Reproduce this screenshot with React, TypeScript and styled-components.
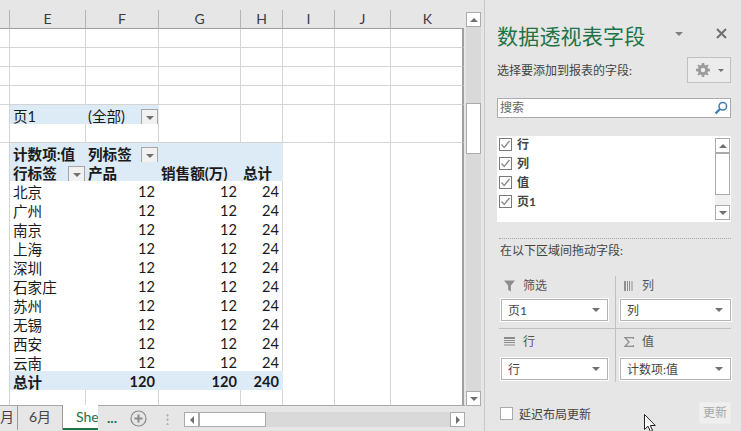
import styled, { createGlobalStyle } from "styled-components";
import { ReactNode } from "react";

const FONT = `Lato, "Noto Sans CJK SC", sans-serif`;
const COLUMNS = ["E", "F", "G", "H", "I", "J", "K"];
const CITIES = ["北京", "广州", "南京", "上海", "深圳", "石家庄", "苏州", "无锡", "西安", "云南"];
const FIELDS = ["行", "列", "值", "页1"];

const GlobalStyle = createGlobalStyle`
  html, body { margin: 0; padding: 0; background: #e6e6e6; overflow: hidden; }
  * { box-sizing: border-box; }
`;

const Page = styled.div`
  position: relative;
  display: flex;
  width: 741px;
  height: 431px;
  overflow: hidden;
  font-family: ${FONT};
  background: #e6e6e6;
`;

const Workbook = styled.div`
  width: 485px;
  flex: none;
  display: flex;
  flex-direction: column;
  border-right: 1px solid #c8c8c8;
`;

const SheetArea = styled.div`
  height: 396px;
  margin-top: 10px;
  display: flex;
  flex: none;
`;

const Grid = styled.div`
  width: 464px;
  height: 396px;
  overflow: hidden;
  background: #fff;
`;

const GridRow = styled.div`
  display: grid;
  grid-template-columns: 10px 76px 73px 82px 42px 52px 56px 73px;
  height: 19px;
`;

const HeaderCell = styled.div`
  background: #e6e6e6;
  border-right: 1px solid #b4b4b4;
  border-bottom: 2px solid #9e9e9e;
  color: #3c3c3c;
  font-size: 14px;
  line-height: 18px;
  text-align: center;
  &:last-child { border-right: 0; }
`;

const Cell = styled.div<{ $blue?: boolean; $plain?: boolean; $edge?: boolean; $rule?: boolean; $right?: boolean; $bold?: boolean }>`
  display: flex;
  align-items: center;
  justify-content: ${(p) => (p.$right ? "flex-end" : "space-between")};
  padding: 0 ${(p) => (p.$right ? "3px" : "0")} 4px ${(p) => (p.$right ? "0" : "2px")};
  background: ${(p) => (p.$blue ? "#ddebf7" : "#fff")};
  border-right: 1px solid ${(p) => (p.$blue || (p.$plain && !p.$edge) ? "transparent" : "#d4d4d4")};
  border-bottom: 1px solid ${(p) => (p.$rule ? "#9bc2e6" : p.$blue || p.$plain ? "transparent" : "#d4d4d4")};
  color: #1a1a1a;
  font-size: 14.6px;
  font-weight: ${(p) => (p.$bold ? 700 : 400)};
  white-space: nowrap;
  &:last-child { border-right: 2px solid #a0a0a0; }
`;

const FirstText = styled.span`
  padding-left: 1px;
`;

const FilterButton = styled.span`
  width: 17px;
  height: 17px;
  flex: none;
  margin-bottom: -4px;
  display: flex;
  align-items: center;
  justify-content: center;
  background: #f1f1f1;
  border: 1px solid #a6a6a6;
`;

const Tri = styled.i<{ $size?: number; $color?: string; $dir?: "up" | "down" | "left" | "right" }>`
  display: block;
  width: 0;
  height: 0;
  ${(p) => {
    const s = p.$size ?? 4;
    const c = p.$color ?? "#707070";
    if (p.$dir === "up") return `border: ${s}px solid transparent; border-top: 0; border-bottom-color: ${c};`;
    if (p.$dir === "left") return `border: ${s}px solid transparent; border-left: 0; border-right-color: ${c};`;
    if (p.$dir === "right") return `border: ${s}px solid transparent; border-right: 0; border-left-color: ${c};`;
    return `border: ${s}px solid transparent; border-bottom: 0; border-top-color: ${c};`;
  }}
`;

const VScroll = styled.div`
  width: 15px;
  margin: 2px 0 0 2px;
  background: #d9d9d9;
  display: flex;
  flex-direction: column;
  justify-content: space-between;
  position: relative;
`;

const ScrollButton = styled.div`
  width: 15px;
  height: 15px;
  flex: none;
  display: flex;
  align-items: center;
  justify-content: center;
  background: #fff;
  border: 1px solid #ababab;
`;

const VThumb = styled.div`
  position: absolute;
  top: 91px;
  left: 0;
  width: 15px;
  height: 51px;
  background: #fff;
  border: 1px solid #ababab;
`;

const TabBar = styled.div`
  height: 25px;
  display: flex;
  border-top: 1px solid #a8a8a8;
  margin-right: 19px;
  margin-top: -1px;
  font-size: 14px;
  color: #444;
`;

const Tab = styled.div<{ $width: number; $active?: boolean; $cut?: boolean }>`
  width: ${(p) => p.$width}px;
  flex: none;
  height: 25px;
  margin-top: -1px;
  overflow: hidden;
  white-space: nowrap;
  border-right: ${(p) => (p.$active ? "0" : "1px solid #9a9a9a")};
  line-height: 23px;
  text-align: ${(p) => (p.$active ? "left" : p.$cut ? "right" : "center")};
  padding: 0 ${(p) => (p.$cut ? "4px" : "0")} 0 ${(p) => (p.$active ? "13px" : "0")};
  background: ${(p) => (p.$active ? "#fff" : "transparent")};
  color: ${(p) => (p.$active ? "#217346" : "#444")};
  border-bottom: ${(p) => (p.$active ? "2px solid #217346" : "0")};
`;

const Ellipsis = styled.div`
  width: 32px;
  flex: none;
  padding-left: 9px;
  color: #217346;
  font-weight: 700;
  font-size: 14px;
  line-height: 24px;
`;

const PlusSlot = styled.div`
  width: 17px;
  flex: none;
  display: flex;
  align-items: center;
`;

const Grip = styled.div`
  width: 4px;
  height: 12px;
  margin: 7px 14px 0 19px;
  flex: none;
  background: radial-gradient(circle, #b5b5b5 1.2px, transparent 1.3px) 0 0 / 3px 4.5px repeat-y;
`;

const HScroll = styled.div`
  width: 281px;
  height: 15px;
  margin-top: 6px;
  flex: none;
  display: flex;
  background: #d9d9d9;
`;

const HThumb = styled.div`
  width: 67px;
  background: #fff;
  border: 1px solid #ababab;
`;

const Spacer = styled.div`
  flex: 1;
`;

const Panel = styled.div`
  width: 256px;
  flex: none;
  display: flex;
  flex-direction: column;
  padding: 0 10px 0 12px;
  color: #444;
  font-size: 12px;
`;

const TitleRow = styled.div`
  height: 57px;
  padding-top: 21px;
  display: flex;
  align-items: flex-start;
  justify-content: space-between;
`;

const Title = styled.div`
  font-size: 21px;
  line-height: 30px;
  color: #217346;
  letter-spacing: 0.2px;
  white-space: nowrap;
`;

const TitleIcons = styled.div`
  display: flex;
  align-items: center;
  gap: 33px;
  padding: 7px 4px 0 0;
`;

const SubRow = styled.div`
  height: 26px;
  display: flex;
  align-items: center;
  justify-content: space-between;
`;

const SubLabel = styled.span`
  padding-bottom: 2px;
`;

const GearButton = styled.div`
  width: 44px;
  height: 26px;
  display: flex;
  align-items: center;
  justify-content: flex-end;
  gap: 8px;
  padding-right: 6px;
  background: #ececec;
  border: 1px solid #c0c0c0;
`;

const Search = styled.div`
  height: 20px;
  margin-top: 15px;
  display: flex;
  align-items: center;
  justify-content: space-between;
  padding: 0 2px;
  background: #fff;
  border: 1px solid #ababab;
  color: #666;
`;

const SearchText = styled.span`
  padding-bottom: 3px;
`;

const FieldBox = styled.div`
  height: 86px;
  margin-top: 18px;
  display: flex;
  background: #fff;
`;

const FieldList = styled.div`
  flex: 1;
  margin-top: -1px;
  padding-left: 2px;
`;

const FieldRow = styled.label`
  height: 19px;
  display: flex;
  align-items: center;
  gap: 5px;
  font-weight: 700;
  color: #444;
  line-height: 16px;
`;

const CheckBox = styled.span<{ $light?: boolean }>`
  width: 13px;
  height: 13px;
  flex: none;
  display: flex;
  align-items: center;
  justify-content: center;
  background: #fff;
  border: 1px solid ${(p) => (p.$light ? "#ababab" : "#7a7a7a")};
`;

const ListScroll = styled.div`
  width: 15px;
  margin: 2px 1px 2px 0;
  display: flex;
  flex-direction: column;
  background: #f0f0f0;
`;

const ListThumb = styled.div`
  height: 42px;
  background: #fff;
  border: 1px solid #ababab;
`;

const DottedRule = styled.div`
  height: 1px;
  margin: 16px 0 0 2px;
  border-top: 1px dotted #a8a8a8;
`;

const DragLabel = styled.div`
  margin: 3px 0 0 3px;
  line-height: 18px;
`;

const Quadrants = styled.div`
  margin: 16px 0 0 2px;
  display: grid;
  grid-template-columns: 116px 116px;
  grid-template-rows: 53px 53px;
`;

const Quadrant = styled.div<{ $right?: boolean; $bottom?: boolean }>`
  padding-left: ${(p) => (p.$right ? "3px" : "1px")};
  border-left: ${(p) => (p.$right ? "1px solid #c0c0c0" : "0")};
  border-bottom: ${(p) => (p.$bottom ? "0" : "1px solid #c0c0c0")};
  padding-top: ${(p) => (p.$bottom ? "3px" : "0")};
`;

const AreaHead = styled.div<{ $loose?: boolean }>`
  height: 19px;
  margin-bottom: ${(p) => (p.$loose ? 6 : 3)}px;
  display: flex;
  align-items: center;
  gap: 8px;
  padding-left: 4px;
  color: #555;
  line-height: 16px;
`;

const AreaIcon = styled.span`
  width: 11px;
  display: flex;
  justify-content: center;
`;

const Select = styled.div<{ $wide?: boolean }>`
  width: ${(p) => (p.$wide ? 113 : 109)}px;
  height: 24px;
  display: flex;
  align-items: center;
  justify-content: space-between;
  padding: 0 8px 0 7px;
  background: #fff;
  border: 1px solid #fff;
  outline: 1px solid #b4b4b4;
  outline-offset: -2px;
  color: #444;
`;

const SelectText = styled.span`
  padding-bottom: 2px;
`;

const Footer = styled.div`
  margin: 20px 0 0 3px;
  display: flex;
  align-items: center;
  justify-content: space-between;
`;

const DeferLabel = styled.div`
  display: flex;
  align-items: center;
  gap: 6px;
`;

const UpdateButton = styled.div`
  width: 32px;
  height: 22px;
  background: #efefef;
  border: 1px solid #ececec;
  color: #a6a6a6;
  line-height: 20px;
  text-align: center;
`;

const Cursor = styled.svg`
  position: absolute;
  left: 644px;
  top: 414px;
`;

function Filter() {
  return (
    <FilterButton>
      <Tri $size={4} />
    </FilterButton>
  );
}

function BlankCells({ names }: { names: string[] }) {
  return (
    <>
      {names.map((name) => (
        <Cell key={name} />
      ))}
    </>
  );
}

function BlankRow() {
  return (
    <GridRow>
      <Cell />
      <BlankCells names={COLUMNS} />
    </GridRow>
  );
}

function BlueRow({ cells, rule, bold }: { cells: ReactNode[]; rule?: boolean; bold?: boolean }) {
  return (
    <GridRow>
      <Cell />
      {cells.map((c, i) => (
        <Cell key={i} $blue $rule={rule} $bold={bold}>
          {c}
        </Cell>
      ))}
      <BlankCells names={COLUMNS.slice(cells.length)} />
    </GridRow>
  );
}

function Gear() {
  return (
    <svg width="14" height="14" viewBox="0 0 14 14" fill="#9c9c9c">
      <path d="M5.800 0h2.400l.3 2 1.300.6L11.500 1.400l1.100 1.100-1.200 1.700.6 1.300 2 .3v2.400l-2 .3-.6 1.300 1.200 1.700-1.100 1.100-1.700-1.200-1.300.6-.3 2H5.800l-.3-2-1.300-.6-1.700 1.200-1.100-1.100 1.200-1.700-.6-1.300-2-.3V5.800l2-.3.6-1.300L1.400 2.500l1.100-1.100 1.700 1.200 1.300-.6zM7 4.800a2.200 2.200 0 1 0 0 4.400 2.200 2.200 0 0 0 0-4.400z" fillRule="evenodd" />
    </svg>
  );
}

function Check() {
  return (
    <svg width="11" height="11" viewBox="0 0 11 11" fill="none" stroke="#8a8a8a" strokeWidth="1.300">
      <path d="M1.500 5.500l2.700 3L9.500 2" />
    </svg>
  );
}

function AreaSelect({ label, wide }: { label: string; wide?: boolean }) {
  return (
    <Select $wide={wide}>
      <SelectText>{label}</SelectText>
      <Tri $size={4} />
    </Select>
  );
}

export default function App() {
  return (
    <Page>
      <GlobalStyle />
      <Workbook>
        <SheetArea>
          <Grid>
            <GridRow>
              <HeaderCell />
              {COLUMNS.map((c) => (
                <HeaderCell key={c}>{c}</HeaderCell>
              ))}
            </GridRow>
            <BlankRow />
            <BlankRow />
            <BlankRow />
            <BlankRow />
            <BlueRow rule cells={[<FirstText>页1</FirstText>, <>(全部)<Filter /></>]} />
            <BlankRow />
            <BlueRow bold cells={[<FirstText>计数项:值</FirstText>, <>列标签<Filter /></>, null, null]} />
            <BlueRow rule bold cells={[<><FirstText>行标签</FirstText><Filter /></>, "产品", "销售额(万)", "总计"]} />
            {CITIES.map((city, i) => {
              const last = i === CITIES.length - 1;
              return (
                <GridRow key={city}>
                  <Cell />
                  <Cell $plain $rule={last}><FirstText>{city}</FirstText></Cell>
                  <Cell $plain $rule={last} $right>12</Cell>
                  <Cell $plain $rule={last} $right>12</Cell>
                  <Cell $plain $edge $rule={last} $right>24</Cell>
                  <BlankCells names={["I", "J", "K"]} />
                </GridRow>
              );
            })}
            <GridRow>
              <Cell />
              <Cell $blue $bold><FirstText>总计</FirstText></Cell>
              <Cell $blue $bold $right>120</Cell>
              <Cell $blue $bold $right>120</Cell>
              <Cell $blue $bold $right>240</Cell>
              <BlankCells names={["I", "J", "K"]} />
            </GridRow>
            <BlankRow />
          </Grid>
          <VScroll>
            <ScrollButton>
              <Tri $dir="up" />
            </ScrollButton>
            <VThumb />
            <ScrollButton>
              <Tri />
            </ScrollButton>
          </VScroll>
        </SheetArea>
        <TabBar>
          <Tab $width={18} $cut>月</Tab>
          <Tab $width={45}>6月</Tab>
          <Tab $width={35} $active>She</Tab>
          <Ellipsis>...</Ellipsis>
          <PlusSlot>
            <svg width="17" height="17" viewBox="0 0 17 17" fill="none" stroke="#8a8a8a">
              <circle cx="8.500" cy="8.500" r="7.500" strokeWidth="1.200" />
              <path d="M8.500 4.500v8M4.500 8.500h8" strokeWidth="2" />
            </svg>
          </PlusSlot>
          <Grip />
          <HScroll>
            <ScrollButton>
              <Tri $dir="left" />
            </ScrollButton>
            <HThumb />
            <Spacer />
            <ScrollButton>
              <Tri $dir="right" />
            </ScrollButton>
          </HScroll>
        </TabBar>
      </Workbook>
      <Panel>
        <TitleRow>
          <Title>数据透视表字段</Title>
          <TitleIcons>
            <Tri $size={4.5} $color="#808080" />
            <svg width="11" height="11" viewBox="0 0 11 11" stroke="#707070" strokeWidth="2">
              <path d="M1 1l9 9M10 1l-9 9" />
            </svg>
          </TitleIcons>
        </TitleRow>
        <SubRow>
          <SubLabel>选择要添加到报表的字段:</SubLabel>
          <GearButton>
            <Gear />
            <Tri $size={3.5} />
          </GearButton>
        </SubRow>
        <Search>
          <SearchText>搜索</SearchText>
          <svg width="14" height="14" viewBox="0 0 14 14" fill="none" stroke="#3f7fb5">
            <circle cx="8.800" cy="5.200" r="3.800" strokeWidth="1.500" />
            <path d="M6 8L1.500 12.500" strokeWidth="2.400" />
          </svg>
        </Search>
        <FieldBox>
          <FieldList>
            {FIELDS.map((f) => (
              <FieldRow key={f}>
                <CheckBox>
                  <Check />
                </CheckBox>
                {f}
              </FieldRow>
            ))}
          </FieldList>
          <ListScroll>
            <ScrollButton>
              <Tri $dir="up" />
            </ScrollButton>
            <ListThumb />
            <Spacer />
            <ScrollButton>
              <Tri />
            </ScrollButton>
          </ListScroll>
        </FieldBox>
        <DottedRule />
        <DragLabel>在以下区域间拖动字段:</DragLabel>
        <Quadrants>
          <Quadrant>
            <AreaHead>
              <AreaIcon>
                <svg width="12" height="12" viewBox="0 0 12 12" fill="#8c8c8c">
                  <path d="M0 0h12L7.500 5.500V12l-3-2V5.500z" />
                </svg>
              </AreaIcon>
              筛选
            </AreaHead>
            <AreaSelect label="页1" />
          </Quadrant>
          <Quadrant $right>
            <AreaHead>
              <AreaIcon>
                <svg width="10" height="10" viewBox="0 0 10 10" fill="#909090">
                  <path d="M0 0h2v10H0zM3 0h1v10H3zM5 0h1v10H5zM7.500 0h1v10h-1z" />
                </svg>
              </AreaIcon>
              列
            </AreaHead>
            <AreaSelect label="列" wide />
          </Quadrant>
          <Quadrant $bottom>
            <AreaHead $loose>
              <AreaIcon>
                <svg width="11" height="9" viewBox="0 0 11 9" fill="#8c8c8c">
                  <path d="M0 0h11v2H0zM0 3h11v1H0zM0 5h11v1H0zM0 7.500h11v1H0z" />
                </svg>
              </AreaIcon>
              行
            </AreaHead>
            <AreaSelect label="行" />
          </Quadrant>
          <Quadrant $right $bottom>
            <AreaHead $loose>
              <AreaIcon>
                <svg width="10" height="10" viewBox="0 0 10 10" fill="none" stroke="#8c8c8c" strokeWidth="1.300">
                  <path d="M9.500 2V.7H1l4 4.300-4 4.300h8.500V8" />
                </svg>
              </AreaIcon>
              值
            </AreaHead>
            <AreaSelect label="计数项:值" wide />
          </Quadrant>
        </Quadrants>
        <Footer>
          <DeferLabel>
            <CheckBox $light />
            延迟布局更新
          </DeferLabel>
          <UpdateButton>更新</UpdateButton>
        </Footer>
      </Panel>
      <Cursor width="13" height="18" viewBox="0 0 13 18">
        <path d="M.5.500v15l3.500-3.300 2.400 5.300 2.200-1-2.300-5h5z" fill="#fff" stroke="#222" />
      </Cursor>
    </Page>
  );
}
